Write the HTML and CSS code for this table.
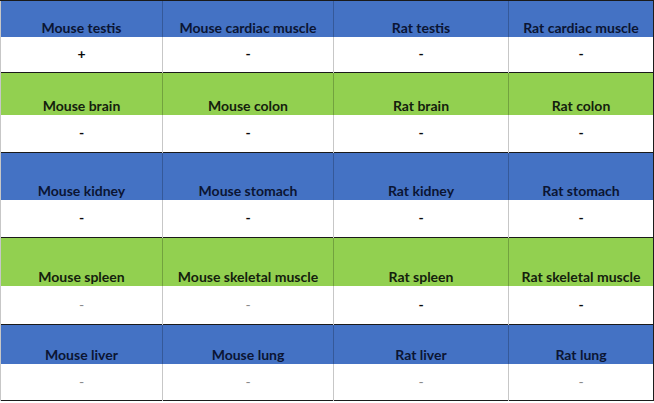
FILE: index.html
```html
<!DOCTYPE html>
<html>
<head>
<meta charset="utf-8">
<link rel="stylesheet" href="styles.css">
</head>
<body>
<table class="grid">
  <colgroup>
    <col class="c1"><col class="c2"><col class="c3"><col class="c4">
  </colgroup>
  <tr class="head blue r1">
    <td>Mouse testis</td><td>Mouse cardiac muscle</td><td>Rat testis</td><td>Rat cardiac muscle</td>
  </tr>
  <tr class="data d1">
    <td>+</td><td>-</td><td>-</td><td>-</td>
  </tr>
  <tr class="head green r2">
    <td>Mouse brain</td><td>Mouse colon</td><td>Rat brain</td><td>Rat colon</td>
  </tr>
  <tr class="data d2">
    <td>-</td><td>-</td><td>-</td><td>-</td>
  </tr>
  <tr class="head blue r3">
    <td>Mouse kidney</td><td>Mouse stomach</td><td>Rat kidney</td><td>Rat stomach</td>
  </tr>
  <tr class="data d3">
    <td>-</td><td>-</td><td>-</td><td>-</td>
  </tr>
  <tr class="head green r4">
    <td>Mouse spleen</td><td>Mouse skeletal muscle</td><td>Rat spleen</td><td>Rat skeletal muscle</td>
  </tr>
  <tr class="data d4">
    <td class="light">-</td><td class="light">-</td><td>-</td><td>-</td>
  </tr>
  <tr class="head blue r5">
    <td>Mouse liver</td><td>Mouse lung</td><td>Rat liver</td><td>Rat lung</td>
  </tr>
  <tr class="data d5">
    <td class="light">-</td><td class="light">-</td><td class="light">-</td><td class="light">-</td>
  </tr>
</table>
</body>
</html>
```
FILE: styles.css
```css
html, body {
  margin: 0;
  padding: 0;
  background: #ffffff;
}

.grid {
  border-collapse: collapse;
  table-layout: fixed;
  width: 653px;
  border: 1px solid #1c1c1c;
  font-family: Lato, "Open Sans", sans-serif;
  font-weight: 700;
  font-size: 14px;
}

.c1 { width: 162px; }
.c2 { width: 171px; }
.c3 { width: 175px; }
.c4 { width: 145px; }

.grid td {
  padding: 0;
  text-align: center;
  border-left: 1px solid rgba(0, 0, 0, 0.22);
  line-height: 16px;
  white-space: nowrap;
}

.head td {
  vertical-align: bottom;
  padding-bottom: 1px;
  border-top: 1px solid #1a1a1a;
}

.blue td {
  background: #4472c4;
  color: #0b1533;
}

.green td {
  background: #92d050;
  color: #14200d;
}

.data td {
  background: #ffffff;
  color: #0a0a0a;
  vertical-align: middle;
}

.data td.light {
  color: #8a8a8a;
  font-weight: 400;
}

.r1 { height: 36px; }
.d1 { height: 36px; }
.r2 { height: 42px; }
.d2 { height: 38px; }
.r3 { height: 47px; }
.d3 { height: 38px; }
.r4 { height: 48px; }
.d4 { height: 39px; }
.r5 { height: 39px; }
.d5 { height: 37px; }
```
